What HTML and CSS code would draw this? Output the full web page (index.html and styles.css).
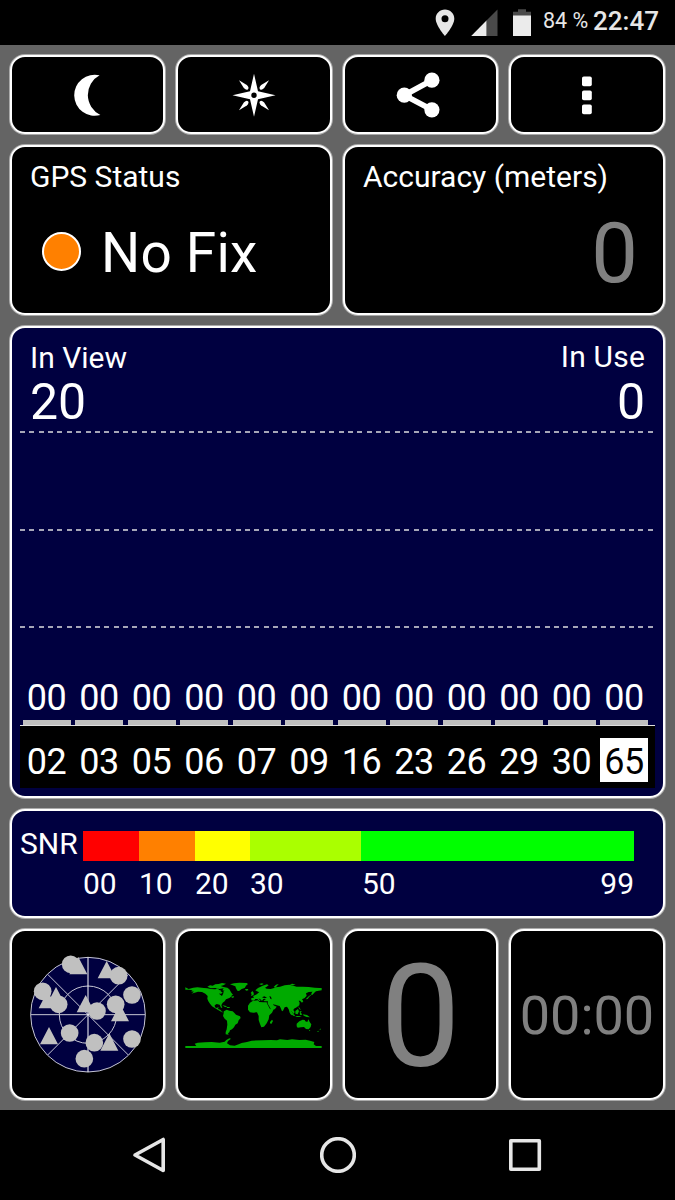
FILE: index.html
```html
<!DOCTYPE html>
<html lang="en">
<head>
    <meta charset="UTF-8">
    <meta name="viewport" content="width=device-width, initial-scale=1.0">
    <title>GPS Status</title>
    <link rel="stylesheet" href="styles.css">
</head>
<body>
    <!-- Status Bar -->
    <header class="status-bar">
        <svg class="icon-pin" width="20" height="28" viewBox="0 0 20 28">
            <path fill="#e6e6e6" fill-rule="evenodd" d="M10 .6C4.800 .6.700 4.700.700 9.800c0 6.700 9.300 17.300 9.300 17.300s9.300-10.600 9.300-17.300C19.300 4.700 15.200.6 10 .6zm0 5.700a3.500 3.500 0 1 1 0 7 3.500 3.500 0 0 1 0-7z"/>
        </svg>
        <svg class="icon-signal" width="27" height="28" viewBox="0 0 27 28">
            <path fill="#4a4a4a" d="M26.500 .6V27H15.500V11.600z"/>
            <path fill="#ebebeb" d="M.2 27L15.500 11.600V27z"/>
        </svg>
        <svg class="icon-battery" width="18" height="28" viewBox="0 0 18 28">
            <path fill="#4a4a4a" d="M5 .3h8v2.400h5V7H0V2.700h5z"/>
            <path fill="#ebebeb" d="M0 6.500h18V27H0z"/>
        </svg>
        <span class="battery-level">84 %</span>
        <span class="clock">22:47</span>
    </header>

    <!-- Dashboard -->
    <main class="dashboard">
        <button class="card tool-btn">
            <svg width="48" height="48" viewBox="0 0 48 48">
                <path d="M35.600 4.300A20.500 20.500 0 1 0 36.400 43.900A22.200 22.200 0 0 1 35.600 4.300z"/>
            </svg>
        </button>
        <button class="card tool-btn">
            <svg width="48" height="48" viewBox="-24 -24.200 48 48">
                <path fill-rule="evenodd" d="M0-21.500L4-4 21.500 0 4 4 0 21.500-4 4-21.500 0-4-4zM0-2.700a2.700 2.700 0 1 0 0 5.400 2.700 2.700 0 0 0 0-5.400z"/>
                <path d="M-15-15L-7.200-10.200Q-4.500-7.500-6-6Q-7.500-4.500-10.200-7.200z"/>
                <path d="M15-15L7.200-10.200Q4.500-7.500 6-6Q7.500-4.500 10.200-7.200z"/>
                <path d="M-15 15L-7.200 10.200Q-4.500 7.500-6 6Q-7.500 4.500-10.200 7.200z"/>
                <path d="M15 15L7.200 10.200Q4.500 7.500 6 6Q7.500 4.500 10.200 7.200z"/>
            </svg>
        </button>
        <button class="card tool-btn">
            <svg width="48" height="48" viewBox="0 0 48 48">
                <path fill="none" stroke="#fff" stroke-width="5.600" d="M34.900 9.200L7.300 24.200L34.900 38.800"/>
                <circle cx="7.300" cy="24.200" r="7.600"/>
                <circle cx="34.900" cy="9.200" r="7.600"/>
                <circle cx="34.900" cy="38.800" r="7.600"/>
            </svg>
        </button>
        <button class="card tool-btn">
            <svg width="48" height="48" viewBox="0 0 48 48">
                <rect x="19" y="5.500" width="9.800" height="9.800" rx="1.800"/>
                <rect x="19" y="19.500" width="9.800" height="9.800" rx="1.800"/>
                <rect x="19" y="33.500" width="9.800" height="9.800" rx="1.800"/>
            </svg>
        </button>

        <section class="card half">
            <h2>GPS Status</h2>
            <div class="fix">
                <i class="fix-dot"></i>
                <span>No Fix</span>
            </div>
        </section>
        <section class="card half">
            <h2>Accuracy (meters)</h2>
            <div class="accuracy">0</div>
        </section>

        <!-- Satellite signal chart -->
        <section class="card full satellites">
            <div class="counts">
                <div>
                    <h2>In View</h2>
                    <div class="count">20</div>
                </div>
                <div class="in-use">
                    <h2>In Use</h2>
                    <div class="count">0</div>
                </div>
            </div>
            <div class="chart">
                <div class="gridline"></div>
                <div class="gridline"></div>
                <div class="gridline"></div>
                <div class="levels">
                    <span>00</span><span>00</span><span>00</span><span>00</span><span>00</span><span>00</span><span>00</span><span>00</span><span>00</span><span>00</span><span>00</span><span>00</span>
                </div>
                <div class="ids">
                    <span>02</span><span>03</span><span>05</span><span>06</span><span>07</span><span>09</span><span>16</span><span>23</span><span>26</span><span>29</span><span>30</span><span class="selected">65</span>
                </div>
            </div>
        </section>

        <!-- SNR legend -->
        <section class="card full snr">
            <span class="snr-title">SNR</span>
            <div class="scale">
                <div class="step red">00</div>
                <div class="step orange">10</div>
                <div class="step yellow">20</div>
                <div class="step lime">30</div>
                <div class="step green"><span>50</span><span>99</span></div>
            </div>
        </section>

        <!-- Bottom tiles -->
        <section class="card tile">
            <svg width="120" height="120" viewBox="53 74 360 360">
                <circle cx="233" cy="253" r="172" fill="#000040"/>
                <g fill="none" stroke="#c6c6d4" stroke-width="3">
                    <circle cx="233" cy="253" r="172"/>
                    <circle cx="233" cy="253" r="86"/>
                    <path d="M61 253H405M112 132L354 374M112 374L354 132"/>
                    <path stroke="#fff" d="M233 81V425"/>
                </g>
                <g fill="#c0c0c0">
                    <circle cx="181" cy="102" r="26.500"/>
                    <circle cx="325" cy="136" r="26.500"/>
                    <circle cx="365" cy="194" r="26.500"/>
                    <circle cx="97" cy="183" r="26.500"/>
                    <circle cx="145" cy="222" r="26.500"/>
                    <circle cx="316" cy="222" r="26.500"/>
                    <circle cx="260" cy="242" r="26.500"/>
                    <circle cx="178" cy="308" r="26.500"/>
                    <circle cx="252" cy="337" r="26.500"/>
                    <circle cx="222" cy="385" r="26.500"/>
                    <circle cx="365" cy="326" r="26.500"/>
                    <path d="M204 80l27 52h-54zM289 92l27 52h-54zM137 170l27 52h-54zM112 182l27 52h-54zM226 194l27 52h-54zM329 221l27 52h-54zM116 290l27 52h-54zM297 309l27 52h-54z"/>
                </g>
            </svg>
        </section>
        <section class="card tile">
            <svg width="156" height="90" viewBox="0 0 468 270" fill="#00aa00">
                <!-- North America -->
                <path d="M28 52L38 57 46 55 52 53 64 52 84 54 94 55 104 57 118 58 124 55 130 60 136 62 132 68 130 72 138 78 142 70 143 63 149 61 158 66 162 72 168 78 160 84 150 88 146 94 140 98 136 106 139 113 135 113 131 104 122 102 116 106 117 112 122 114 128 111 126 117 133 119 138 125 146 126 138 127 130 122 120 116 108 109 102 101 97 94 94 86 95 78 88 71 78 66 66 65 56 68 46 71 54 65 45 64 50 61 38 59 28 59z"/>
                <path d="M94 50L102 46 110 47 118 43 128 42 138 39 150 41 142 46 134 48 142 51 154 53 160 58 166 68 171 74 165 77 157 73 156 67 148 63 139 61 143 55 130 57 118 54 104 55zM133 64l7 3-5 5-6-3zM166 80l7-2 1 4-6 2z"/>
                <!-- Greenland and Iceland -->
                <path d="M162 43L174 40 190 38 212 39 216 42 210 47 206 54 197 57 189 63 184 62 180 55 178 49 170 46zM207 57h9l1 4-7 1z"/>
                <!-- Caribbean -->
                <path d="M139 106l9 1 6 3-7 1zM153 111h8v3h-9z"/>
                <!-- South America -->
                <path d="M144 124L152 119 160 122 170 124 176 130 180 134 192 139 194 144 188 151 185 160 178 164 174 172 168 178 162 181 160 187 156 190 158 194 149 193 149 186 152 178 154 164 153 152 146 146 141 138 143 130z"/>
                <!-- Europe and Asia -->
                <path d="M226 91V84L234 83 231 78 240 74 246 70 250 66 246 60 254 54 264 52 272 56 284 57 292 55 300 52 312 50 326 46 340 44 352 47 362 50 380 50 398 51 416 53 430 54 437 54V61L428 62 420 64 414 68 409 75 406 70 410 65 398 66 390 70 392 77 386 84 378 88 382 94 378 98 372 92 368 92 371 98 370 106 362 112 354 116 352 120 356 126 353 132 346 124 344 126 348 134 346 136 341 128 338 118 333 110 326 112 321 122 318 124 314 114 311 108 302 106 294 103 298 108 302 110 297 117 286 122 281 114 274 102 276 94 266 94 262 92 270 87 262 87 258 93 253 88 247 85 254 93 250 93 244 87 238 87 234 92z"/>
                <path d="M224 69l5-6 4 5v7l-8 3 2-6zM243 64L238 61 246 54 260 47 273 43 278 46 270 52 256 60 250 67zM249 42l9-2 5 2-7 3zM293 51l7-7 8-2-5 6-5 5zM341 43l8-2 10 3-9 2zM392 85l6-6 7-5 6-8 7-2-5 6-7 5-6 5-5 7-6 1z"/>
                <!-- Africa -->
                <path d="M216 107L222 98 230 93 246 91 250 96 262 97 272 97 278 108 284 118 292 120 288 128 280 136 278 148 272 160 264 170 256 172 252 162 248 150 248 138 243 127 232 128 222 127 216 119zM282 156l6-7 3 4-5 9-4-2z"/>
                <!-- Black, Caspian and Red seas -->
                <path fill="#000" d="M258 82l7-3 8 4-8 2zM280 78l5 2 2 8-4-2zM272 98l2 1 10 17-2 1zM292 103l7 5-2 1-6-5z"/>
                <!-- Indonesia and Australia -->
                <path d="M340 119L346 124 352 132 357 136 355 139 347 134 343 127zM358 123l8-6 3 7-4 9-7-2zM371 124l7-1-4 4 5 7-7 1zM357 138h14l6 2-14 1zM366 108l5 6 4 6-5-3zM381 133l12 2 9 7-10-1-9-4z"/>
                <path d="M362 161L370 154 380 149 386 150 388 154 394 156 397 148 401 156 406 163 404 171 398 178 390 177 384 171 375 172 365 173 362 169zM399 180h4l-2 4zM430 179l5-4-2 5zM423 184l7-2-4 4z"/>
                <!-- Antarctica -->
                <path d="M28 228H61L56 221 65 218 87 217 107 216 131 218 146 215 151 210 160 205 165 206 156 213 153 220 162 226 176 227 188 223 197 219 213 216 227 212 260 211 284 210 303 211 312 208 334 210 348 208 370 210 389 209 405 213 415 216 413 223 420 228H437V234H28z"/>
            </svg>
        </section>
        <section class="card tile speed">0</section>
        <section class="card tile timer">00:00</section>
    </main>

    <!-- Navigation Bar -->
    <nav class="nav-bar">
        <svg width="36" height="36" viewBox="0 0 36 36">
            <path d="M31.200 2.500V33.500L3 18z"/>
        </svg>
        <svg width="36" height="36" viewBox="0 0 36 36">
            <circle cx="18" cy="18" r="16.300"/>
        </svg>
        <svg width="36" height="36" viewBox="0 0 36 36">
            <rect x="3.800" y="3.800" width="28.500" height="28.500"/>
        </svg>
    </nav>
</body>
</html>
```
FILE: styles.css
```css
* {
    box-sizing: border-box;
}
body {
    font-family: Roboto, sans-serif;
    background-color: #000000;
    color: #ffffff;
    margin: 0;
    width: 675px;
    height: 1200px;
    display: flex;
    flex-direction: column;
    overflow: hidden;
}
svg {
    display: block;
    flex: none;
}
h2 {
    font-size: 30px;
    font-weight: 400;
    line-height: 36px;
    margin: 0;
}
.status-bar {
    height: 45px;
    display: flex;
    justify-content: flex-end;
    align-items: center;
    padding-right: 16px;
    color: #e6e6e6;
}
.icon-signal {
    margin-left: 16px;
}
.icon-battery {
    margin-left: 15px;
}
.battery-level {
    width: 46px;
    font-size: 21.5px;
    line-height: 28px;
    margin: 0 4px 4px 12px;
    white-space: nowrap;
}
.clock {
    width: 66px;
    font-size: 26px;
    font-weight: 500;
    line-height: 30px;
    margin-bottom: 3px;
}
.dashboard {
    height: 1065px;
    background-color: #646464;
    display: grid;
    grid-template-columns: 155px 156px 155px 156px;
    grid-template-rows: 79px 170px 472px 109px 171px;
    gap: 11px;
    padding: 10px;
}
.card {
    background-color: #000000;
    border: 2px solid #ffffff;
    border-radius: 15px;
    box-shadow: 0 0 0 1px rgba(255, 255, 255, 0.45);
    min-width: 0;
}
.tool-btn {
    display: flex;
    align-items: center;
    justify-content: center;
    padding: 0;
}
.tool-btn svg {
    fill: #ffffff;
    overflow: visible;
}
.half {
    grid-column: span 2;
    padding: 12px 18px 0;
}
.full {
    grid-column: span 4;
    background-color: #000040;
}
.fix {
    display: flex;
    align-items: center;
    margin-top: 26px;
    padding-left: 12px;
    font-size: 55px;
    line-height: 64px;
    letter-spacing: 0.2px;
}
.fix-dot {
    width: 39px;
    height: 39px;
    background-color: #ff8000;
    border: 2px solid #ffffff;
    border-radius: 50%;
    margin: 0 20px 4px 0;
}
.accuracy {
    color: #808080;
    font-size: 83px;
    line-height: 90px;
    margin-top: 14px;
    padding-right: 7px;
    text-align: right;
}
.satellites {
    padding: 12px 8px 0;
}
.counts {
    display: flex;
    justify-content: space-between;
    height: 91px;
    padding: 0 10px;
}
.count {
    font-size: 50px;
    line-height: 52px;
}
.in-use {
    text-align: right;
    margin-top: -1px;
}
.in-use h2 {
    letter-spacing: 0.2px;
}
.in-use .count {
    margin-top: 1px;
}
.chart {
    width: 635px;
}
.gridline {
    width: 633px;
    height: 2px;
    margin-bottom: 96px;
    background: repeating-linear-gradient(to right, #a6a6b8 0, #a6a6b8 5px, transparent 5px, transparent 9.37px);
}
.gridline:nth-child(2) {
    margin-bottom: 95px;
}
.gridline:nth-child(3) {
    margin-bottom: 48px;
}
.levels, .ids {
    display: grid;
    grid-template-columns: repeat(12, 48px);
    column-gap: 4.5px;
    padding-left: 2.5px;
    font-size: 36px;
    letter-spacing: -0.4px;
    text-align: center;
}
.levels {
    line-height: 44px;
    border-bottom: 1px solid #e0e0e0;
}
.levels span {
    border-bottom: 5px solid #c0c0c0;
}
.ids {
    height: 62px;
    padding-top: 12px;
    background-color: #000000;
    line-height: 48px;
}
.ids span {
    height: 44px;
}
.ids .selected {
    background-color: #ffffff;
    color: #000000;
}
.snr {
    display: flex;
    padding: 20px 0 0 8px;
    font-size: 30px;
}
.snr-title {
    width: 63px;
    line-height: 26px;
}
.scale {
    display: grid;
    grid-template-columns: 56px 56px 55px 111px 273px;
}
.step {
    line-height: 45px;
    border-top: 30px solid;
    color: #ffffff;
}
.red {
    border-color: #ff0000;
}
.orange {
    border-color: #ff8000;
}
.yellow {
    border-color: #ffff00;
}
.lime {
    border-color: #aaff00;
}
.green {
    border-color: #00ff00;
    display: flex;
    justify-content: space-between;
    padding-left: 1px;
}
.tile {
    display: flex;
    align-items: center;
    justify-content: center;
    color: #808080;
}
.speed {
    font-size: 143px;
    line-height: 171px;
    padding-top: 5px;
}
.timer {
    font-size: 54px;
    line-height: 60px;
    padding-top: 3px;
}
.nav-bar {
    height: 90px;
    display: flex;
    align-items: center;
    justify-content: center;
    gap: 151.5px;
}
.nav-bar svg {
    fill: none;
    stroke: #e6e6e6;
    stroke-width: 3.6;
    stroke-linejoin: round;
}
```
